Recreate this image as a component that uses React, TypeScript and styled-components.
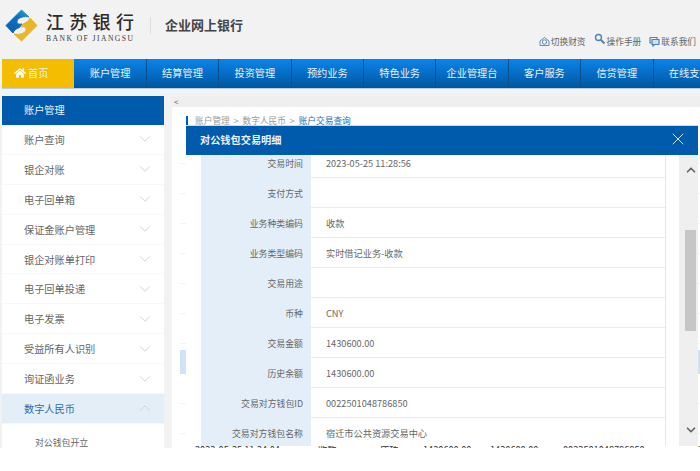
import React from "react";
import styled, { createGlobalStyle } from "styled-components";
import { ChevronDown, ChevronUp, X } from "lucide-react";
import { FaHome } from "react-icons/fa";

const GlobalStyle = createGlobalStyle`
  html, body {
    margin: 0;
    padding: 0;
    background: #fff;
  }
  * {
    box-sizing: border-box;
  }
`;

const Page = styled.div`
  width: 700px;
  height: 448px;
  overflow: hidden;
  background: #f2f2f2;
  font-family: "Noto Sans CJK SC", "Liberation Sans", sans-serif;
  color: #666;
`;

const Header = styled.header`
  height: 59px;
  display: flex;
  position: relative;
  padding: 9px 4px 0 5px;
`;

const LogoWords = styled.div`
  margin-left: 8px;
  width: 94px;
`;

const LogoCn = styled.div`
  font-size: 18px;
  line-height: 25px;
  font-weight: 500;
  letter-spacing: 5.3px;
  color: #2d2a28;
  white-space: nowrap;
`;

const LogoEn = styled.div`
  font-family: "Liberation Serif", serif;
  font-size: 7.6px;
  line-height: 9px;
  letter-spacing: 1.45px;
  color: #3a3a3a;
  white-space: nowrap;
`;

const Divider = styled.div`
  width: 1px;
  height: 17px;
  margin: 8px 0 0 10px;
  background: #dcdcdc;
`;

const SystemName = styled.div`
  margin: 6px 0 0 14px;
  font-size: 13px;
  line-height: 20px;
  font-weight: 700;
  color: #444;
`;

const TopLinks = styled.div`
  margin-left: auto;
  display: flex;
  align-items: center;
  height: 12px;
  margin-top: 26px;
  gap: 8px;
`;

const TopLink = styled.span`
  display: flex;
  align-items: center;
  gap: 1px;
  font-size: 8.7px;
  color: #666;
  white-space: nowrap;
`;

const Nav = styled.nav`
  height: 30px;
  margin-left: 2px;
  display: flex;
  overflow: hidden;
  border-bottom: 1px solid #b5cfe6;
`;

const NavItem = styled.div<{ $active?: boolean }>`
  flex: 0 0 72.4px;
  display: flex;
  align-items: center;
  justify-content: center;
  gap: 2px;
  padding-bottom: 2px;
  padding-right: ${(p) => (p.$active ? "13px" : "0")};
  font-size: 10.2px;
  white-space: nowrap;
  color: #eaf3fb;
  background: ${(p) =>
    p.$active ? "#f4bd00" : "linear-gradient(#0a84ea, #00569f)"};
  border-right: 1px solid ${(p) => (p.$active ? "#f4bd00" : "#0b4f8f")};
`;

const Content = styled.div`
  display: flex;
  margin-top: 7px;
  height: 352px;
`;

const Sidebar = styled.aside`
  flex: 0 0 162px;
  margin-left: 2px;
  background: #fff;
`;

const SideTitle = styled.div`
  height: 29px;
  padding: 0 0 2px 22px;
  display: flex;
  align-items: center;
  font-size: 10.2px;
  color: #eaf3fb;
  background: #005bac;
`;

const SideItem = styled.div<{ $open?: boolean }>`
  height: 29.9px;
  padding: 0 10px 0 22px;
  display: flex;
  align-items: center;
  justify-content: space-between;
  font-size: 10.2px;
  color: ${(p) => (p.$open ? "#2a6db0" : "#666")};
  background: ${(p) => (p.$open ? "#e4eef7" : "#fff")};
  border-bottom: 1px solid #f8f8f8;
`;

const SideSub = styled.div`
  padding: 10px 0 0 33px;
  font-size: 8.9px;
  line-height: 18px;
  color: #666;
`;

const Main = styled.main`
  flex: 1;
  margin-left: 8px;
  position: relative;
  display: flex;
  flex-direction: column;
  min-width: 0;
`;

const Strip = styled.div`
  height: 11px;
  padding-left: 2px;
  font-size: 8px;
  line-height: 11px;
  color: #555;
  background: #efefef;
`;

const Sheet = styled.div`
  flex: 1;
  background: #fff;
  padding-top: 9px;
  overflow: hidden;
`;

const Crumbs = styled.div`
  height: 18px;
  margin-left: 14px;
  padding-left: 7px;
  border-left: 2px solid #005bac;
  font-size: 8.7px;
  line-height: 9px;
  word-spacing: 2px;
  color: #999;
  white-space: nowrap;

  b {
    font-weight: 400;
    color: #2a6db0;
  }
`;

const BackRow = styled.div`
  height: 30px;
  margin-left: 8px;
  width: 540px;
  padding-left: 15px;
  display: grid;
  grid-template-columns: 123px 62px 43px 67px 73px 135px 60px;
  align-items: center;
  font-size: 9.2px;
  color: #333;
  white-space: nowrap;
  border-bottom: 1px solid #f4f4f4;
`;

const BackSelected = styled(BackRow)`
  background: linear-gradient(transparent 6px, #cfe2f8 6px);
  border-bottom: none;
`;

const Modal = styled.section`
  position: absolute;
  left: 14px;
  top: 29px;
  width: 512px;
  height: 321px;
  display: flex;
  flex-direction: column;
  background: #fff;
`;

const ModalHead = styled.div`
  height: 30px;
  flex: none;
  padding: 0 10px 3px 14px;
  display: flex;
  align-items: center;
  justify-content: space-between;
  font-size: 10.2px;
  font-weight: 700;
  color: #eaf3fb;
  background: #005bac;
  border-top: 1px solid #c8dcef;
`;

const ModalBody = styled.div`
  flex: 1;
  display: flex;
  min-height: 0;
`;

const TableArea = styled.div`
  flex: 1;
  overflow: hidden;
  padding-left: 15px;
`;

const DetailTable = styled.div`
  width: 465px;
  margin-top: -7px;
  border-right: 1px solid #dbe9f7;
`;

const DetailRow = styled.div`
  height: 30px;
  display: flex;
  border-bottom: 1px solid #e1edf9;
`;

const DetailLabel = styled.div`
  flex: 0 0 110px;
  padding: 2px 8px 0 0;
  display: flex;
  align-items: center;
  justify-content: flex-end;
  font-size: 8.9px;
  background: #e3eef9;
  color: #666;
`;

const DetailValue = styled.div`
  flex: 1;
  padding-left: 15px;
  display: flex;
  align-items: center;
  font-size: 9.2px;
  color: #666;
`;

const Scrollbar = styled.div`
  flex: 0 0 18px;
  display: flex;
  flex-direction: column;
  padding: 9px 0 10px;
  background: #efefef;
  color: #666;
`;

const ScrollArrow = styled.div`
  height: 12px;
  padding-left: 5px;
  display: flex;
  align-items: center;
  justify-content: center;
`;

const ScrollThumb = styled.div`
  width: 11px;
  height: 101px;
  margin: 54px 0 auto 6px;
  background: #c6c6c6;
`;

const menu = [
  "账户查询",
  "银企对账",
  "电子回单箱",
  "保证金账户管理",
  "银企对账单打印",
  "电子回单投递",
  "电子发票",
  "受益所有人识别",
  "询证函业务",
];

const navs = [
  "账户管理",
  "结算管理",
  "投资管理",
  "预约业务",
  "特色业务",
  "企业管理台",
  "客户服务",
  "信贷管理",
  "在线支付",
];

const details = [
  ["交易时间", "2023-05-25 11:28:56"],
  ["支付方式", ""],
  ["业务种类编码", "收款"],
  ["业务类型编码", "实时借记业务-收款"],
  ["交易用途", ""],
  ["币种", "CNY"],
  ["交易金额", "1430600.00"],
  ["历史余额", "1430600.00"],
  ["交易对方钱包ID", "0022501048786850"],
  ["交易对方钱包名称", "宿迁市公共资源交易中心"],
];

const backCells = [
  "2023-05-25 11:24:04",
  "收款",
  "成功",
  "1430600.00",
  "1430600.00",
  "0022501048786850",
  "交易",
];

const BackCells = () => (
  <>
    {backCells.map((c, i) => (
      <span key={i}>{c}</span>
    ))}
  </>
);

const swirl =
  "M16.5 1 L24 8 C20 7 13 8 12 12 C11.5 15 14 15.5 17 15 L14.5 18.5 C11 19.5 9 21.5 8 24 L1 16.5 Z";

const BankLogo = () => (
  <svg width="33" height="33" viewBox="0 0 33 33" style={{ flex: "none" }}>
    <defs>
      <linearGradient id="bankBlue" x1="0.8" y1="0" x2="0.2" y2="0.8">
        <stop offset="0" stopColor="#2a9fb8" />
        <stop offset="0.4" stopColor="#0f72c0" />
        <stop offset="1" stopColor="#0b63b4" />
      </linearGradient>
    </defs>
    <path d={swirl} fill="url(#bankBlue)" stroke="url(#bankBlue)" strokeLinejoin="round" />
    <path
      d={swirl}
      transform="rotate(180 16.5 16.5)"
      fill="#e8b62a"
      stroke="#e8b62a"
      strokeLinejoin="round"
    />
  </svg>
);

const SwapIcon = () => (
  <svg width="11" height="11" viewBox="0 0 11 11" fill="none" stroke="#5f8db8" strokeWidth="1">
    <path d="M1 5 L5.5 1.5 L10 5 V9.5 H1 Z" />
    <circle cx="5.5" cy="6" r="2.2" />
  </svg>
);

const GuideIcon = () => (
  <svg width="12" height="12" viewBox="0 0 12 12" fill="none" stroke="#4f83b5" strokeWidth="1.4" style={{ marginTop: -4 }}>
    <circle cx="4.5" cy="4.5" r="3" />
    <path d="M7 7 L10.5 10.5" strokeWidth="2" />
  </svg>
);

const ChatIcon = () => (
  <svg width="11" height="11" viewBox="0 0 11 11" fill="none" stroke="#4f83b5" strokeWidth="1.2">
    <path d="M1 1.5 H8 V3" />
    <path d="M1 1.5 V7 H2.5" />
    <path d="M3 3.5 H10 V8.5 H5.5 L4 10 V8.5 H3 Z" fill="#cfe0f0" />
  </svg>
);

const App: React.FC = () => {
  return (
    <Page>
      <GlobalStyle />
      <Header>
        <BankLogo />
        <LogoWords>
          <LogoCn>江苏银行</LogoCn>
          <LogoEn>BANK OF JIANGSU</LogoEn>
        </LogoWords>
        <Divider />
        <SystemName>企业网上银行</SystemName>
        <TopLinks>
          <TopLink>
            <SwapIcon />
            切换财资
          </TopLink>
          <TopLink>
            <GuideIcon />
            操作手册
          </TopLink>
          <TopLink>
            <ChatIcon />
            联系我们
          </TopLink>
        </TopLinks>
      </Header>

      <Nav>
        <NavItem $active>
          <FaHome size={12} color="#fff" />
          首页
        </NavItem>
        {navs.map((n) => (
          <NavItem key={n}>{n}</NavItem>
        ))}
      </Nav>

      <Content>
        <Sidebar>
          <SideTitle>账户管理</SideTitle>
          {menu.map((m) => (
            <SideItem key={m}>
              {m}
              <ChevronDown size={18} strokeWidth={1} color="#c4c4c4" />
            </SideItem>
          ))}
          <SideItem $open>
            数字人民币
            <ChevronUp size={18} strokeWidth={1} color="#c4c4c4" />
          </SideItem>
          <SideSub>对公钱包开立</SideSub>
        </Sidebar>

        <Main>
          <Strip>&lt;</Strip>
          <Sheet>
            <Crumbs>
              账户管理 &gt; 数字人民币 &gt; <b>账户交易查询</b>
            </Crumbs>
            {Array.from({ length: 7 }).map((_, i) => (
              <BackRow key={i} />
            ))}
            <BackSelected />
            <BackRow />
            <BackRow />
            <BackRow>
              <BackCells />
            </BackRow>
          </Sheet>

          <Modal>
            <ModalHead>
              对公钱包交易明细
              <X size={20} strokeWidth={1} color="#fff" />
            </ModalHead>
            <ModalBody>
              <TableArea>
                <DetailTable>
                  {details.map(([label, value]) => (
                    <DetailRow key={label}>
                      <DetailLabel>{label}</DetailLabel>
                      <DetailValue>{value}</DetailValue>
                    </DetailRow>
                  ))}
                </DetailTable>
              </TableArea>
              <Scrollbar>
                <ScrollArrow>
                  <ChevronUp size={14} strokeWidth={3} />
                </ScrollArrow>
                <ScrollThumb />
                <ScrollArrow>
                  <ChevronDown size={14} strokeWidth={3} />
                </ScrollArrow>
              </Scrollbar>
            </ModalBody>
          </Modal>
        </Main>
      </Content>
    </Page>
  );
};

export default App;
